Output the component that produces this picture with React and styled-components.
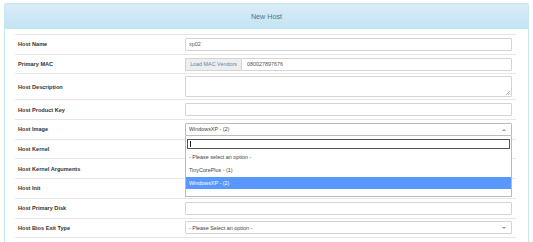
import styled, { createGlobalStyle } from 'styled-components';

const GlobalStyle = createGlobalStyle`
  body {
    margin: 0;
    background: #fff;
    font-family: "Liberation Sans", Arial, sans-serif;
  }
`;

const Panel = styled.div`
  margin: 3px 4px 0;
  border: 1px solid #c9e6f2;
  border-bottom: none;
  border-radius: 2px 2px 0 0;
  height: 239px;
  box-sizing: border-box;
`;

const Heading = styled.div`
  height: 24px;
  display: flex;
  align-items: center;
  justify-content: center;
  background: linear-gradient(#d9edf7, #c4e3f3);
  border-bottom: 1px solid #bce8f1;
  color: #4d7290;
  font-size: 7.2px;
`;

const Body = styled.div`
  padding: 5px 12px 0 10px;
`;

const Table = styled.div`
  display: flex;
  flex-direction: column;
  border-bottom: 1px solid #e6e6e6;
`;

const Row = styled.div`
  display: grid;
  grid-template-columns: 170px 1fr;
  align-items: center;
  height: ${(p) => (p.$tall ? '26px' : '19.7px')};
  border-top: 1px solid #e6e6e6;
  box-sizing: border-box;
`;

const Label = styled.div`
  padding-left: 3px;
  font-size: 5.6px;
  font-weight: bold;
  color: #333;
`;

const Cell = styled.div`
  padding-right: 4px;
  position: relative;
`;

const Field = styled.div`
  height: ${(p) => (p.$tall ? '21px' : '13px')};
  border: 1px solid #d4d4d4;
  border-radius: 1px;
  box-sizing: border-box;
  display: flex;
  align-items: center;
  padding-left: 3px;
  font-size: 5.4px;
  color: #555;
  position: relative;
  background: #fff;
`;

const Group = styled.div`
  display: flex;
  height: 13px;
`;

const Addon = styled.div`
  width: 56px;
  flex: none;
  background: #eee;
  border: 1px solid #d4d4d4;
  border-right: none;
  box-sizing: border-box;
  display: flex;
  align-items: center;
  justify-content: center;
  font-size: 5.4px;
  color: #5b86ad;
`;

const GroupField = styled(Field)`
  flex: 1;
  padding-left: 5px;
`;

const Grip = styled.svg`
  position: absolute;
  right: 1px;
  bottom: 1px;
`;

const Select = styled(Field)`
  color: #444;
  padding-left: 3px;
  border-color: ${(p) => (p.$open ? '#bbb' : '#d4d4d4')};
`;

const Arrow = styled.span`
  position: absolute;
  right: 5px;
  top: 5px;
  border-left: 2px solid transparent;
  border-right: 2px solid transparent;
  ${(p) =>
    p.$up
      ? 'border-bottom: 2px solid #999;'
      : 'border-top: 2px solid #999;'}
`;

const Dropdown = styled.div`
  position: absolute;
  top: 13px;
  left: 0;
  right: 4px;
  height: 61px;
  background: #fff;
  border: 1px solid #bbb;
  border-top: none;
  box-sizing: border-box;
  z-index: 5;
  padding-top: 3px;
`;

const Search = styled.div`
  margin: 0 1px 2px 1px;
  height: 10px;
  border: 1px solid #555;
  box-sizing: border-box;
  display: flex;
  align-items: center;
  padding-left: 2px;
`;

const Caret = styled.span`
  width: 1px;
  height: 6px;
  background: #222;
`;

const Option = styled.div`
  height: 12.8px;
  display: flex;
  align-items: center;
  padding-left: 3px;
  font-size: 5.4px;
  color: ${(p) => (p.$active ? '#fff' : '#444')};
  background: ${(p) => (p.$active ? '#5897fb' : 'transparent')};
`;

const App = () => {
  return (
    <>
      <GlobalStyle />
      <Panel>
        <Heading>New Host</Heading>
        <Body>
          <Table>
            <Row>
              <Label>Host Name</Label>
              <Cell>
                <Field>xp02</Field>
              </Cell>
            </Row>
            <Row>
              <Label>Primary MAC</Label>
              <Cell>
                <Group>
                  <Addon>Load MAC Vendors</Addon>
                  <GroupField>080027897676</GroupField>
                </Group>
              </Cell>
            </Row>
            <Row $tall>
              <Label>Host Description</Label>
              <Cell>
                <Field $tall>
                  <Grip width="5" height="5" viewBox="0 0 5 5">
                    <path d="M1 5 L5 1 M3 5 L5 3" stroke="#888" strokeWidth="0.6" />
                  </Grip>
                </Field>
              </Cell>
            </Row>
            <Row>
              <Label>Host Product Key</Label>
              <Cell>
                <Field />
              </Cell>
            </Row>
            <Row>
              <Label>Host Image</Label>
              <Cell>
                <Select $open>
                  WindowsXP - (2)
                  <Arrow $up />
                </Select>
                <Dropdown>
                  <Search>
                    <Caret />
                  </Search>
                  <Option>- Please select an option -</Option>
                  <Option>TinyCorePlus - (1)</Option>
                  <Option $active>WindowsXP - (2)</Option>
                </Dropdown>
              </Cell>
            </Row>
            <Row>
              <Label>Host Kernel</Label>
              <Cell />
            </Row>
            <Row>
              <Label>Host Kernel Arguments</Label>
              <Cell />
            </Row>
            <Row>
              <Label>Host Init</Label>
              <Cell />
            </Row>
            <Row>
              <Label>Host Primary Disk</Label>
              <Cell>
                <Field />
              </Cell>
            </Row>
            <Row>
              <Label>Host Bios Exit Type</Label>
              <Cell>
                <Select>
                  - Please Select an option -
                  <Arrow />
                </Select>
              </Cell>
            </Row>
          </Table>
        </Body>
      </Panel>
    </>
  );
};

export default App;
